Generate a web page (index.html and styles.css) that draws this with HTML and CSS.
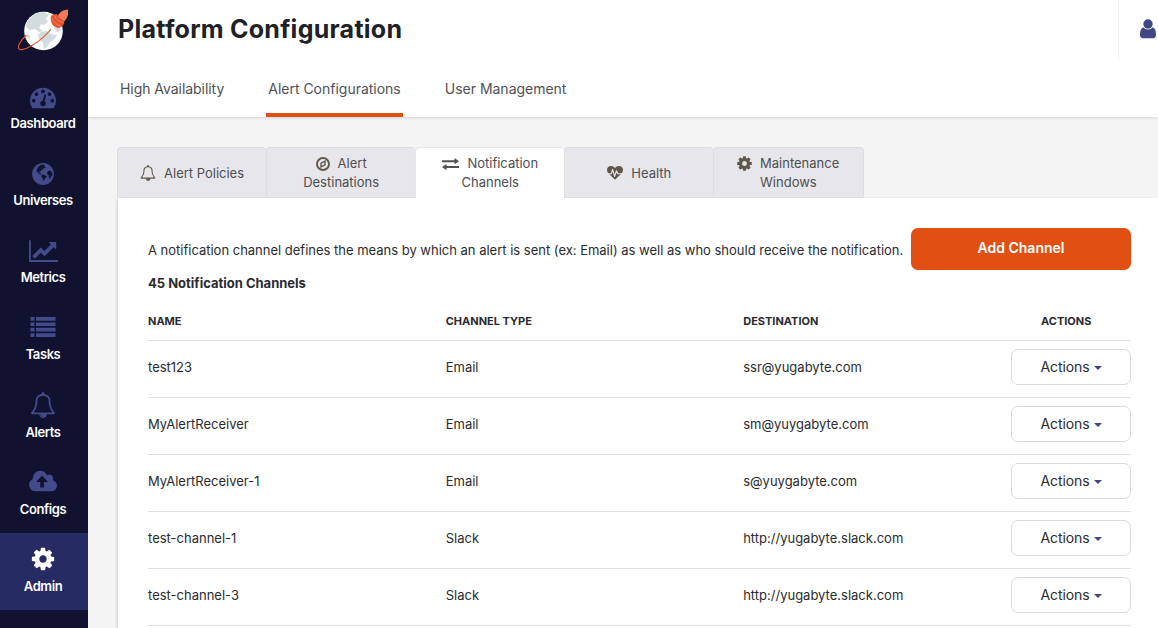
FILE: index.html
```html
<!DOCTYPE html>
<html lang="en">
<head>
<meta charset="utf-8">
<title>Platform Configuration</title>
<link rel="stylesheet" href="styles.css">
</head>
<body>
<svg class="defs" width="0" height="0">
  <symbol id="cog" viewBox="0 0 1792 1792"><path d="M1152 896q0-106-75-181t-181-75-181 75-75 181 75 181 181 75 181-75 75-181zm512-109v222q0 12-8 23t-20 13l-185 28q-19 54-39 91 35 50 107 138 10 12 10 25t-9 23q-27 37-99 108t-94 71q-12 0-26-9l-138-108q-44 23-91 38-16 136-29 186-7 28-36 28h-222q-14 0-24.500-8.500t-11.500-21.500l-28-184q-49-16-90-37l-141 107q-10 9-25 9-14 0-25-11-126-114-165-168-7-10-7-23 0-12 8-23 15-21 51-66.500t54-70.500q-27-50-41-99l-183-27q-13-2-21-12.500t-8-23.500v-222q0-12 8-23t19-13l186-28q14-46 39-92-40-57-107-138-10-12-10-24 0-10 9-23 26-36 98.500-107.500t94.500-71.500q13 0 26 10l138 107q44-23 91-38 16-136 29-186 7-28 36-28h222q14 0 24.500 8.500t11.500 21.500l28 184q49 16 90 37l142-107q9-9 24-9 13 0 25 10 129 119 165 170 7 8 7 22 0 12-8 23-15 21-51 66.500t-54 70.500q26 50 41 98l183 28q13 2 21 12.500t8 23.500z"/></symbol>
  <symbol id="bell" viewBox="0 0 1792 1792"><path d="M912 1696q0-16-16-16-59 0-101.500-42.500t-42.500-101.500q0-16-16-16t-16 16q0 73 51.500 124.500t124.500 51.500q16 0 16-16zm-666-288h1300q-266-300-266-832 0-51-24-105t-69-103-121.500-80.500-169.500-31.500-169.500 31.500-121.500 80.500-69 103-24 105q0 532-266 832zm1482 0q0 52-38 90t-90 38h-448q0 106-75 181t-181 75-181-75-75-181h-448q-52 0-90-38t-38-90q50-42 91-88t85-119.500 74.500-158.500 50-206 19.500-260q0-152 117-282.500t307-158.500q-8-19-8-39 0-40 28-68t68-28 68 28 28 68q0 20-8 39 190 28 307 158.500t117 282.500q0 139 19.500 260t50 206 74.500 158.500 85 119.500 91 88z"/></symbol>
</svg>
<div class="app">
  <nav class="sidebar">
    <svg class="logo" width="54" height="44" viewBox="0 0 54 44">
      <circle cx="25.500" cy="22" r="19.300" fill="#fff"/>
      <path fill="#d3dbde" d="M13 8l5-4 8-1 5 3-3 3 2 4-4 3-3-1-2 4 4 3-4 1-4-3-5 1-4-3 1-6zM23 23l6-1 4 3 6 1-3 5-4 2-3 5-3 2-1-6-4-4-1-4zM37 13l4 3 2 6-4 1-3-4zM9 24l3 3v3l-3-2z"/>
      <path fill="none" stroke="#e0562f" stroke-width="1.100" d="M8.500 26C2 32-1 38 1 40c4 3 22-7 32-20"/>
      <path fill="#f0795b" d="M41 5q2-3 5-3.800 2-.7 4-.7V6q-2 6-6 8l-7-5z"/>
      <path fill="#e5532d" d="M33 7q2-2 6-2 1 4 5 5.500 3 1 2 4.500-2 3-5 4-5-1-7-4-2-5-1-8z"/>
      <path fill="none" stroke="#f58a6b" stroke-width=".8" d="M34 9q2 6 9 8M36.500 6.500q2 6 9 7"/>
    </svg>
    <a class="item"><svg class="ico" width="26" height="26" viewBox="0 0 1792 1792"><path d="M384 1152q0-53-37.500-90.500t-90.500-37.500-90.500 37.500-37.500 90.500 37.500 90.500 90.500 37.500 90.500-37.500 37.500-90.500zm192-448q0-53-37.500-90.500t-90.500-37.500-90.500 37.500-37.500 90.500 37.500 90.500 90.500 37.500 90.500-37.500 37.500-90.500zm428 481l101-382q6-26-7.500-48.500t-38.500-29.500-48 6.500-30 39.500l-101 382q-60 5-107 43.500t-63 98.500q-20 77 20 146t117 89 146-20 89-117q16-60-6-117t-72-91zm660-33q0-53-37.500-90.500t-90.500-37.500-90.500 37.500-37.500 90.500 37.500 90.500 90.500 37.500 90.500-37.500 37.500-90.500zm-640-640q0-53-37.500-90.500t-90.500-37.500-90.500 37.500-37.500 90.500 37.500 90.500 90.500 37.500 90.500-37.500 37.500-90.500zm448 192q0-53-37.500-90.500t-90.500-37.500-90.500 37.500-37.500 90.500 37.500 90.500 90.500 37.500 90.500-37.500 37.500-90.500zm320 448q0 261-141 483-19 29-54 29h-1402q-35 0-54-29-141-221-141-483 0-182 71-348t191-286 286-191 348-71 348 71 286 191 191 286 71 348z"/></svg><span>Dashboard</span></a>
    <a class="item"><svg class="ico" width="26" height="26" viewBox="0 0 26 26"><circle cx="13" cy="13" r="10.900"/><path fill="#11122f" d="M10.500 4l2.500-.4 2 .9-.6 1.100 1.200.8-1.600 1-1.200-.1.300.9-1.600 1-1.100 1.400-1.100.2.100 1 1.300.4.500 1-.8.300-2-1.300-1.800-2.200.7-2.300 1.300-2zM11.300 14l1.700-.6 2.300 1 1.600.8-.9 1.600-1.300 1-.6 1.800-1.100-.2-.3-2.500-1.400-1.400zM18 10.200l1.700-.6 1.500.6 1.200 2.500-.1 2.200-1.300.3-.6 2-1 .8-.7-2 .1-1.700-1.200-.5-.6-1.500z"/></svg><span>Universes</span></a>
    <a class="item"><svg class="ico chart" width="29" height="26" viewBox="0 0 2048 1792"><path d="M2048 1536v128h-2048v-1536h128v1408h1920zm-128-1248v435q0 21-19.500 29.500t-35.500-7.500l-121-121-633 633q-10 10-23 10t-23-10l-233-233-416 416-192-192 585-585q10-10 23-10t23 10l233 233 464-464-121-121q-16-16-7.500-35.500t29.500-19.500h435q14 0 23 9t9 23z"/></svg><span>Metrics</span></a>
    <a class="item"><svg class="ico" width="26" height="26" viewBox="0 0 26 26"><path d="M.5 3h4v3.700h-4zM6 3h19.500v3.700H6zM.5 8.400h4v3.700h-4zM6 8.400h19.500v3.700H6zM.5 13.800h4v3.700h-4zM6 13.800h19.500v3.700H6zM.5 19.200h4v3.700h-4zM6 19.200h19.500v3.700H6z" transform="translate(0 -1)"/></svg><span>Tasks</span></a>
    <a class="item low"><svg class="ico" width="26" height="26"><use href="#bell"/></svg><span>Alerts</span></a>
    <a class="item low"><svg class="ico" width="28" height="26" viewBox="0 0 1920 1792"><path d="M1280 864q0-14-9-23l-352-352q-9-9-23-9t-23 9l-351 351q-10 12-10 24 0 14 9 23t23 9h224v352q0 13 9.500 22.500t22.500 9.500h192q13 0 22.500-9.500t9.500-22.500v-352h224q13 0 22.500-9.500t9.500-22.500zm640 288q0 159-112.500 271.500t-271.500 112.500h-1088q-185 0-316.500-131.500t-131.500-316.500q0-130 70-240t188-165q-2-30-2-43 0-212 150-362t362-150q156 0 285.500 87t188.500 231q71-62 166-62 106 0 181 75t75 181q0 76-41 138 130 31 213.500 135.500t83.500 238.500z"/></svg><span>Configs</span></a>
    <a class="item low active"><svg class="ico" width="26" height="26"><use href="#cog"/></svg><span>Admin</span></a>
  </nav>
  <main class="main">
    <header class="header">
      <div class="top">
        <h1>Platform Configuration</h1>
        <div class="profile"><svg width="16" height="20" viewBox="0 0 16 20"><circle cx="8" cy="5" r="4.700"/><path d="M3.400 8.300C1 9 0 12 0 15.500 0 18 1 19.200 3 19.200h10c2 0 3-1.200 3-3.700 0-3.500-1-6.500-3.400-7.200C11.500 9.700 10 10.500 8 10.500S4.500 9.700 3.400 8.300z"/></svg></div>
      </div>
      <div class="nav-tabs"><a>High Availability</a><a class="on">Alert Configurations</a><a>User Management</a></div>
    </header>
    <section class="content">
      <div class="tabs">
        <a class="tab"><svg class="ti" width="16" height="16"><use href="#bell"/></svg><span>Alert Policies</span></a>
        <a class="tab two"><span><svg class="ti" width="14" height="14" viewBox="0 0 14 14"><circle cx="7" cy="7" r="6" fill="none" stroke="#5f5748" stroke-width="1.900"/><path fill-rule="evenodd" d="M4.300 5.700L9.700 3v5.300L4.300 11zM5.700 6.600v2.200L8.300 7.500V5.300z"/></svg>Alert<br>Destinations</span></a>
        <a class="tab two on"><span><svg class="ti" width="17" height="14" viewBox="0 0 17 14"><path d="M0 3.300h12.500V1L17 4.300l-4.500 3V5.300H0zM17 9H4.500V6.900L0 10l4.500 3.200V11H17z"/></svg>Notification<br>Channels</span></a>
        <a class="tab"><svg class="ti" width="16" height="16" viewBox="0 0 16 16"><path d="M8 14.800L1.800 8.800C.7 7.600 0 6.200 0 4.700 0 2.500 1.700 1 4.200 1 5.800 1 7 1.900 8 3c1-1.100 2.200-2 3.800-2C14.300 1 16 2.500 16 4.700c0 1.500-.7 2.900-1.800 4.100z"/><path fill="none" stroke="#e7e6eb" stroke-width="1.100" stroke-linejoin="round" d="M.8 8.700h3.500l1.300-4.300 2 7 1.900-5.600 1.300 2.900h4.400"/></svg><span>Health</span></a>
        <a class="tab maint"><svg class="ti" width="17" height="17"><use href="#cog"/></svg><span>Maintenance<br>Windows</span></a>
      </div>
      <div class="panel">
        <div class="intro"><p>A notification channel defines the means by which an alert is sent (ex: Email) as well as who should receive the notification.</p><button class="add">Add Channel</button></div>
        <h2>45 Notification Channels</h2>
        <div class="row head"><span>NAME</span><span>CHANNEL TYPE</span><span>DESTINATION</span><span>ACTIONS</span></div>
        <div class="row"><span>test123</span><span>Email</span><span>ssr@yugabyte.com</span><button class="act">Actions<i></i></button></div>
        <div class="row"><span>MyAlertReceiver</span><span>Email</span><span>sm@yuygabyte.com</span><button class="act">Actions<i></i></button></div>
        <div class="row"><span>MyAlertReceiver-1</span><span>Email</span><span>s@yuygabyte.com</span><button class="act">Actions<i></i></button></div>
        <div class="row"><span>test-channel-1</span><span>Slack</span><span>http://yugabyte.slack.com</span><button class="act">Actions<i></i></button></div>
        <div class="row"><span>test-channel-3</span><span>Slack</span><span>http://yugabyte.slack.com</span><button class="act">Actions<i></i></button></div>
      </div>
    </section>
  </main>
</div>
</body>
</html>
```
FILE: styles.css
```css
* { box-sizing: border-box; }
body { margin: 0; font-family: Inter, "Liberation Sans", sans-serif; font-size: 13px; color: #2b2b2f; overflow: hidden; }
h1, h2, p { margin: 0; }
button { font-family: inherit; }
.defs { display: block; height: 0; }
.app { display: flex; height: 628px; background: #f4f4f5; overflow: hidden; }
.sidebar { width: 88px; flex: none; background: #11122f; display: flex; flex-direction: column; }
.logo { margin: 9px 0 18px 18px; flex: none; }
.item { height: 77px; flex: none; padding: 13px 2px 0 0; display: flex; flex-direction: column; align-items: center; color: #fff; font-weight: 600; font-size: 13px; line-height: 16px; letter-spacing: -.42px; }
.item span { margin-top: 5px; white-space: nowrap; }
.low span { margin-top: 6px; }
.ico { fill: #444b8b; display: block; }
.chart { margin-left: 1px; }
.active { background: #262c63; }
.active .ico { fill: #fff; }
.main { flex: 1; min-width: 0; }
.header { height: 117px; background: #fff; box-shadow: 0 1px 3px rgba(0,0,0,.13); position: relative; }
.top { height: 59px; display: flex; justify-content: space-between; }
h1 { font-size: 25px; line-height: 58px; font-weight: 700; color: #202028; padding-left: 30px; letter-spacing: .26px; }
.profile { width: 40px; border-left: 1px solid #efeff0; padding: 19px 0 0 21px; fill: #3f4785; }
.profile svg { display: block; }
.nav-tabs { display: flex; height: 58px; padding-left: 30px; gap: 40px; color: #505055; font-size: 14px; line-height: 60px; letter-spacing: -.01px; }
.nav-tabs a { padding: 0 2px; height: 58px; white-space: nowrap; }
.nav-tabs a:first-child { letter-spacing: -.05px; }
.nav-tabs .on { border-bottom: 4px solid #e14f13; }
.content { padding: 30px 0 0 29px; }
.tabs { display: flex; height: 51px; }
.tab { width: 149.100px; height: 51px; flex: none; border: 1px solid #dcdce0; border-right-width: 0; border-radius: 4px 4px 0 0; background: #e7e6eb; display: flex; align-items: center; justify-content: center; color: #4e4e52; line-height: 19px; padding-top: 1px; }
.tab:last-child { width: 150.600px; border-right-width: 1px; }
.tab .ti { fill: #5f5748; margin-right: 8px; flex: none; }
.two { text-align: center; padding: 0; }
.two .ti { vertical-align: -3px; }
.tab.on { background: #fff; border-color: #e6e6e8; border-bottom-color: #fff; }
.tab.on .ti { fill: #505050; }
.maint { align-items: flex-start; padding: 6px 2px 0 0; }
.maint .ti { margin-top: 1px; margin-right: 7px; }
.panel { margin-left: 1px; height: 500px; background: #fff; box-shadow: -1px 1px 3px rgba(0,0,0,.14); padding: 30px 27px 0 30px; }
.intro { display: flex; height: 42px; justify-content: space-between; }
.intro p { line-height: 45px; white-space: nowrap; letter-spacing: -.008px; }
.add { width: 220px; height: 42px; flex: none; background: #e14f13; border: 0; border-radius: 7px; color: #fff; font-weight: 600; font-size: 14px; padding: 0 0 3px; }
h2 { font-size: 13px; font-weight: 700; line-height: 27px; }
.row { display: grid; grid-template-columns: 297.700px 297.500px 1fr 120px; align-items: center; height: 57px; border-bottom: 1px solid #dfdfe2; padding-bottom: 4px; }
.head { height: 44px; font-size: 11px; font-weight: 700; padding: 5px 0 0; }
.head span:last-child { padding-left: 30px; }
.act { width: 120px; height: 36px; border: 1px solid #dadade; border-radius: 7px; background: #fff; color: #2b2b2f; font-size: 14px; letter-spacing: -.07px; padding: 0 0 2px; display: flex; align-items: center; justify-content: center; }
.act i { margin-left: 4px; margin-top: 3px; border: 4px solid transparent; border-top-color: #3f4785; border-bottom: 0; }
```
